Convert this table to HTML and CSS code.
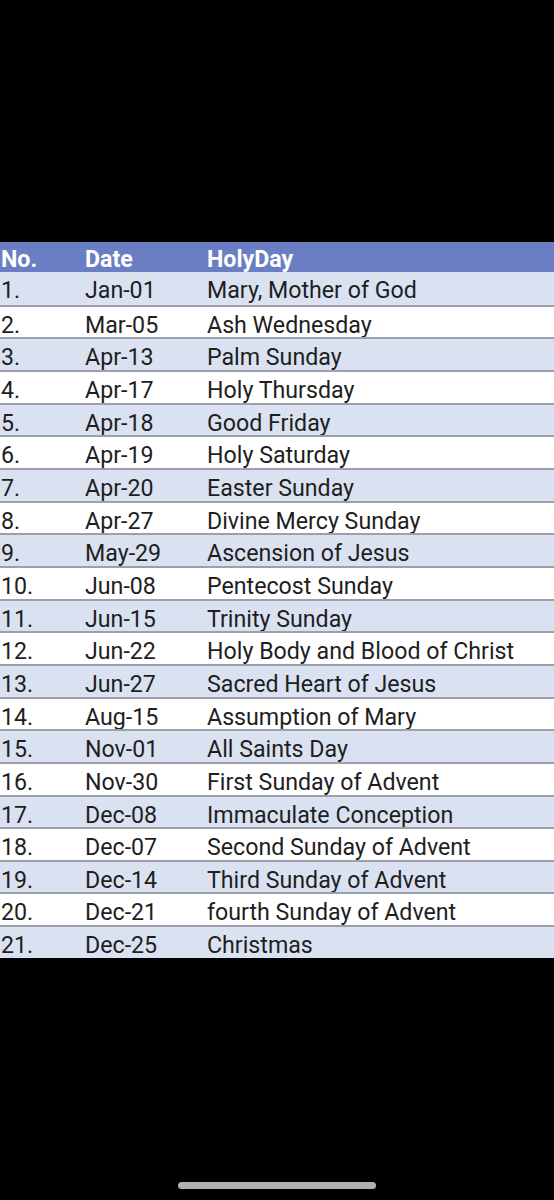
FILE: index.html
```html
<!DOCTYPE html>
<html>
<head>
<meta charset="utf-8">
<link rel="stylesheet" href="styles.css">
</head>
<body>
<div class="screen">
  <div class="table">
    <div class="row head"><span class="c1">No.</span><span class="c2">Date</span><span class="c3">HolyDay</span></div>
    <div class="row odd"><span class="c1">1.</span><span class="c2">Jan-01</span><span class="c3">Mary, Mother of God</span></div>
    <div class="row"><span class="c1">2.</span><span class="c2">Mar-05</span><span class="c3">Ash Wednesday</span></div>
    <div class="row odd"><span class="c1">3.</span><span class="c2">Apr-13</span><span class="c3">Palm Sunday</span></div>
    <div class="row"><span class="c1">4.</span><span class="c2">Apr-17</span><span class="c3">Holy Thursday</span></div>
    <div class="row odd"><span class="c1">5.</span><span class="c2">Apr-18</span><span class="c3">Good Friday</span></div>
    <div class="row"><span class="c1">6.</span><span class="c2">Apr-19</span><span class="c3">Holy Saturday</span></div>
    <div class="row odd"><span class="c1">7.</span><span class="c2">Apr-20</span><span class="c3">Easter Sunday</span></div>
    <div class="row"><span class="c1">8.</span><span class="c2">Apr-27</span><span class="c3">Divine Mercy Sunday</span></div>
    <div class="row odd"><span class="c1">9.</span><span class="c2">May-29</span><span class="c3">Ascension of Jesus</span></div>
    <div class="row"><span class="c1">10.</span><span class="c2">Jun-08</span><span class="c3">Pentecost Sunday</span></div>
    <div class="row odd"><span class="c1">11.</span><span class="c2">Jun-15</span><span class="c3">Trinity Sunday</span></div>
    <div class="row"><span class="c1">12.</span><span class="c2">Jun-22</span><span class="c3">Holy Body and Blood of Christ</span></div>
    <div class="row odd"><span class="c1">13.</span><span class="c2">Jun-27</span><span class="c3">Sacred Heart of Jesus</span></div>
    <div class="row"><span class="c1">14.</span><span class="c2">Aug-15</span><span class="c3">Assumption of Mary</span></div>
    <div class="row odd"><span class="c1">15.</span><span class="c2">Nov-01</span><span class="c3">All Saints Day</span></div>
    <div class="row"><span class="c1">16.</span><span class="c2">Nov-30</span><span class="c3">First Sunday of Advent</span></div>
    <div class="row odd"><span class="c1">17.</span><span class="c2">Dec-08</span><span class="c3">Immaculate Conception</span></div>
    <div class="row"><span class="c1">18.</span><span class="c2">Dec-07</span><span class="c3">Second Sunday of Advent</span></div>
    <div class="row odd"><span class="c1">19.</span><span class="c2">Dec-14</span><span class="c3">Third Sunday of Advent</span></div>
    <div class="row"><span class="c1">20.</span><span class="c2">Dec-21</span><span class="c3">fourth Sunday of Advent</span></div>
    <div class="row odd"><span class="c1">21.</span><span class="c2">Dec-25</span><span class="c3">Christmas</span></div>
  </div>
  <div class="homebar"></div>
</div>
</body>
</html>
```

FILE: styles.css
```css
html, body {
  margin: 0;
  padding: 0;
  background: #000;
}
.screen {
  width: 554px;
  height: 1200px;
  background: #000;
  display: flex;
  flex-direction: column;
  align-items: center;
  font-family: Roboto, "Noto Sans", sans-serif;
}
.table {
  width: 554px;
  margin-top: 242px;
  display: flex;
  flex-direction: column;
}
.row {
  display: grid;
  grid-template-columns: 83px 122px 1fr;
  align-items: center;
  height: 32.67px;
  box-sizing: border-box;
  border-top: 2px solid #9ba0aa;
  background: #ffffff;
  color: #1e1e1e;
  font-size: 23.2px;
  line-height: 30px;
  white-space: nowrap;
  padding-top: 3px;
}
.row.odd {
  background: #dae2f2;
}
.row.head {
  height: 30px;
  border-top: none;
  background: #6a7ec3;
  color: #ffffff;
  font-weight: 700;
  padding-top: 2px;
}
.row.head + .row {
  border-top: none;
}
.c1 { padding-left: 1px; }
.c2 { padding-left: 2px; }
.c3 { padding-left: 2px; }
.homebar {
  width: 198px;
  height: 7px;
  border-radius: 4px;
  background: #b0b0b0;
  margin-top: 224px;
}
```
